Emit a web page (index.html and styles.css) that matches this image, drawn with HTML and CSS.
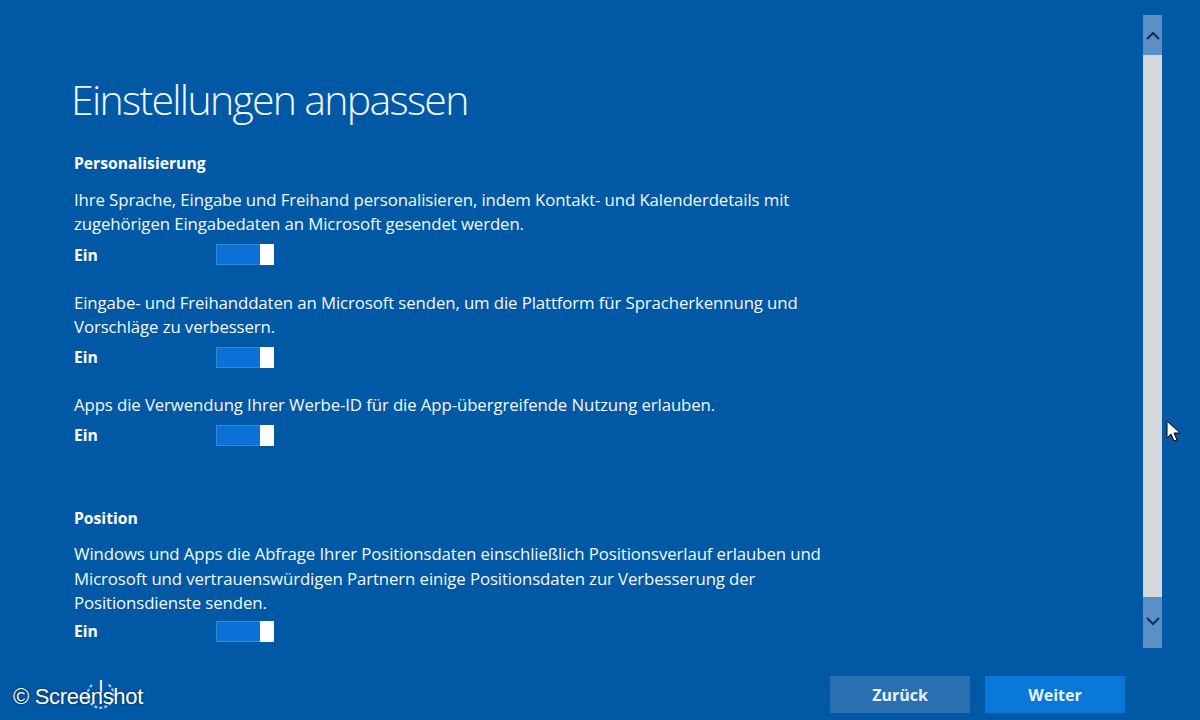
FILE: index.html
```html
<!DOCTYPE html>
<html lang="de">
<head>
<meta charset="utf-8">
<link rel="stylesheet" href="styles.css">
</head>
<body>
<div class="screen">
  <main class="content">
    <h1 class="title">Einstellungen anpassen</h1>
    <section class="group">
      <h2 class="heading">Personalisierung</h2>
      <div class="setting">
        <p class="desc">Ihre Sprache, Eingabe und Freihand personalisieren, indem Kontakt- und Kalenderdetails mit zugehörigen Eingabedaten an Microsoft gesendet werden.</p>
        <div class="row"><span class="state">Ein</span><span class="toggle"><span class="knob"></span></span></div>
      </div>
      <div class="setting">
        <p class="desc">Eingabe- und Freihanddaten an Microsoft senden, um die Plattform für Spracherkennung und Vorschläge zu verbessern.</p>
        <div class="row"><span class="state">Ein</span><span class="toggle"><span class="knob"></span></span></div>
      </div>
      <div class="setting">
        <p class="desc">Apps die Verwendung Ihrer Werbe-ID für die App-übergreifende Nutzung erlauben.</p>
        <div class="row"><span class="state">Ein</span><span class="toggle"><span class="knob"></span></span></div>
      </div>
    </section>
    <section class="group group2">
      <h2 class="heading">Position</h2>
      <div class="setting setting-pos">
        <p class="desc">Windows und Apps die Abfrage Ihrer Positionsdaten einschließlich Positionsverlauf erlauben und Microsoft und vertrauenswürdigen Partnern einige Positionsdaten zur Verbesserung der Positionsdienste senden.</p>
        <div class="row row-pos"><span class="state">Ein</span><span class="toggle"><span class="knob"></span></span></div>
      </div>
    </section>
  </main>
  <aside class="scrollbar">
    <div class="sb-btn">
      <svg width="14" height="9" viewBox="0 0 14 9"><path d="M1 8 L7 2 L13 8" fill="none" stroke="#13305a" stroke-width="2.2"/></svg>
    </div>
    <div class="sb-thumb"></div>
    <div class="sb-btn sb-down">
      <svg width="14" height="9" viewBox="0 0 14 9"><path d="M1 1 L7 7 L13 1" fill="none" stroke="#13305a" stroke-width="2.2"/></svg>
    </div>
  </aside>
  <footer class="footer">
    <button class="btn btn-back">Zurück</button>
    <button class="btn btn-next">Weiter</button>
  </footer>
  <svg class="spinner" width="36" height="36" viewBox="0 0 36 36"><path d="M10 8 A13 13 0 1 0 25 6.5" fill="none" stroke="#a9c9ea" stroke-width="2.2" stroke-dasharray="3 2"/><path d="M19 3 V16" stroke="#dbe9f6" stroke-width="2.2"/></svg>
  <div class="watermark">© Screenshot</div>
  <svg class="cursor" width="16" height="24" viewBox="0 0 16 24"><path d="M1 1 L1 18 L5 14 L8 21 L11 20 L8 13 L14 13 Z" fill="#fff" stroke="#000" stroke-width="1"/></svg>
</div>
</body>
</html>
```
FILE: styles.css
```css
* { box-sizing: border-box; }
html, body { margin: 0; padding: 0; }
body {
  width: 1200px;
  height: 720px;
  overflow: hidden;
  background: #0159a6;
  font-family: "Open Sans", "Noto Sans", "Liberation Sans", sans-serif;
  color: #fff;
}
.screen {
  position: relative;
  width: 1200px;
  height: 720px;
  display: flex;
}
.content {
  width: 1143px;
  padding: 72px 0 0 74px;
}
.title {
  margin: 0 0 0 -3px;
  font-weight: 300;
  font-size: 41px;
  line-height: 54px;
  letter-spacing: -1.7px;
  color: #f2f7fc;
}
.group { margin-top: 26px; }
.group2 { margin-top: 56px; }
.heading {
  margin: 0;
  font-size: 15.7px;
  font-weight: 700;
  line-height: 22px;
}
.setting { margin-top: 14px; }
.setting + .setting { margin-top: 20px; }
.setting-pos { margin-top: 13px; }
.desc {
  margin: 0;
  width: 775px;
  font-size: 16.8px;
  line-height: 24.3px;
  letter-spacing: -0.1px;
  color: #f4f8fc;
}
.row {
  display: flex;
  align-items: center;
  height: 32px;
  margin-top: 2px;
}
.row-pos { margin-top: 0; }
.state {
  width: 142px;
  font-size: 15.7px;
  font-weight: 700;
}
.toggle {
  width: 58px;
  height: 21px;
  background: #0a72d6;
  border: 1px solid #2f8ad8;
  display: flex;
  justify-content: flex-end;
}
.knob {
  width: 14px;
  height: 21px;
  margin: -1px -1px 0 0;
  background: #fff;
}
.scrollbar {
  margin-top: 15px;
  width: 19px;
  height: 633px;
  display: flex;
  flex-direction: column;
}
.sb-btn {
  height: 40px;
  background: #5a90c6;
  display: flex;
  align-items: center;
  justify-content: center;
}
.sb-down { height: 51px; padding-bottom: 2px; }
.sb-thumb {
  flex: 1;
  background: #d5d9de;
}
.footer {
  position: absolute;
  left: 830px;
  top: 676px;
  display: flex;
  gap: 15px;
}
.btn {
  width: 140px;
  height: 37px;
  border: none;
  font-family: "Open Sans", "Noto Sans", sans-serif;
  font-size: 16px;
  font-weight: 700;
  color: #e8f2fb;
}
.btn-back { background: #2a6fb0; }
.btn-next { background: #0a78d8; }
.watermark {
  position: absolute;
  left: 13px;
  top: 684px;
  font-family: "Liberation Sans", Arial, sans-serif;
  font-size: 22px;
  color: #fff;
  letter-spacing: -0.3px;
  text-shadow: 0 0 3px rgba(0,0,0,0.6);
}
.spinner {
  position: absolute;
  left: 82px;
  top: 677px;
}
.cursor {
  position: absolute;
  left: 1166px;
  top: 420px;
}
```
